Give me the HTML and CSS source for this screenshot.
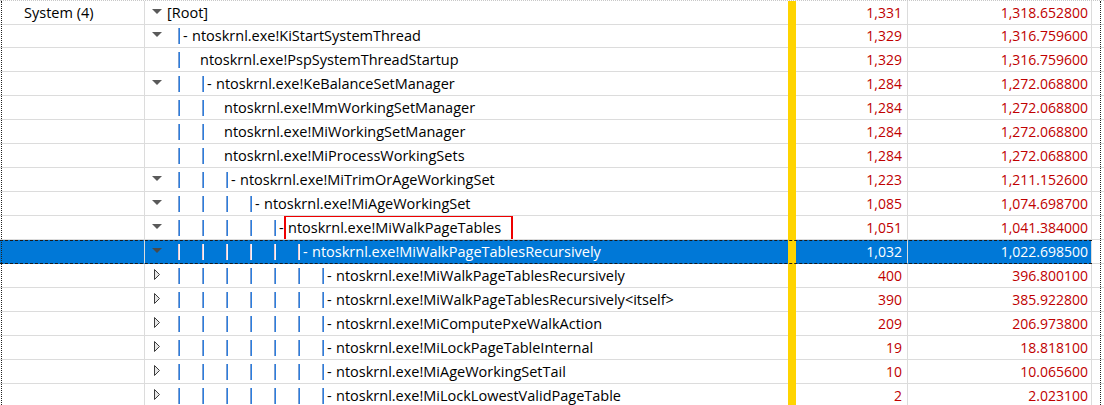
FILE: index.html
```html
<!DOCTYPE html>
<html lang="ko">
<head>
    <meta charset="UTF-8">
    <title>Stacks</title>
    <link rel="stylesheet" href="styles.css">
</head>
<body>

    <div class="grid">

        <div class="row">
            <div class="cell proc">System (4)</div>
            <div class="cell tree">
                <span class="tog"><svg width="10" height="6"><path d="M0 0H10L5 5Z" fill="#5a5a5a"/></svg></span>
                <span class="name">[Root]</span>
            </div>
            <div class="mark"></div>
            <div class="cell num">1,331</div>
            <div class="cell num wt">1,318.652800</div>
            <div class="cell end"></div>
        </div>

        <div class="row">
            <div class="cell proc"></div>
            <div class="cell tree">
                <span class="tog"><svg width="10" height="6"><path d="M0 0H10L5 5Z" fill="#5a5a5a"/></svg></span>
                <span class="lead"></span><span class="g br">-</span>
                <span class="name">ntoskrnl.exe!KiStartSystemThread</span>
            </div>
            <div class="mark"></div>
            <div class="cell num">1,329</div>
            <div class="cell num wt">1,316.759600</div>
            <div class="cell end"></div>
        </div>

        <div class="row">
            <div class="cell proc"></div>
            <div class="cell tree">
                <span class="tog"></span>
                <span class="lead"></span><span class="g lf"></span>
                <span class="name">ntoskrnl.exe!PspSystemThreadStartup</span>
            </div>
            <div class="mark"></div>
            <div class="cell num">1,329</div>
            <div class="cell num wt">1,316.759600</div>
            <div class="cell end"></div>
        </div>

        <div class="row">
            <div class="cell proc"></div>
            <div class="cell tree">
                <span class="tog"><svg width="10" height="6"><path d="M0 0H10L5 5Z" fill="#5a5a5a"/></svg></span>
                <span class="lead"></span><span class="g"></span><span class="g br">-</span>
                <span class="name">ntoskrnl.exe!KeBalanceSetManager</span>
            </div>
            <div class="mark"></div>
            <div class="cell num">1,284</div>
            <div class="cell num wt">1,272.068800</div>
            <div class="cell end"></div>
        </div>

        <div class="row">
            <div class="cell proc"></div>
            <div class="cell tree">
                <span class="tog"></span>
                <span class="lead"></span><span class="g"></span><span class="g lf"></span>
                <span class="name">ntoskrnl.exe!MmWorkingSetManager</span>
            </div>
            <div class="mark"></div>
            <div class="cell num">1,284</div>
            <div class="cell num wt">1,272.068800</div>
            <div class="cell end"></div>
        </div>

        <div class="row">
            <div class="cell proc"></div>
            <div class="cell tree">
                <span class="tog"></span>
                <span class="lead"></span><span class="g"></span><span class="g lf"></span>
                <span class="name">ntoskrnl.exe!MiWorkingSetManager</span>
            </div>
            <div class="mark"></div>
            <div class="cell num">1,284</div>
            <div class="cell num wt">1,272.068800</div>
            <div class="cell end"></div>
        </div>

        <div class="row">
            <div class="cell proc"></div>
            <div class="cell tree">
                <span class="tog"></span>
                <span class="lead"></span><span class="g"></span><span class="g lf"></span>
                <span class="name">ntoskrnl.exe!MiProcessWorkingSets</span>
            </div>
            <div class="mark"></div>
            <div class="cell num">1,284</div>
            <div class="cell num wt">1,272.068800</div>
            <div class="cell end"></div>
        </div>

        <div class="row">
            <div class="cell proc"></div>
            <div class="cell tree">
                <span class="tog"><svg width="10" height="6"><path d="M0 0H10L5 5Z" fill="#5a5a5a"/></svg></span>
                <span class="lead"></span><span class="g"></span><span class="g"></span><span class="g br">-</span>
                <span class="name">ntoskrnl.exe!MiTrimOrAgeWorkingSet</span>
            </div>
            <div class="mark"></div>
            <div class="cell num">1,223</div>
            <div class="cell num wt">1,211.152600</div>
            <div class="cell end"></div>
        </div>

        <div class="row">
            <div class="cell proc"></div>
            <div class="cell tree">
                <span class="tog"><svg width="10" height="6"><path d="M0 0H10L5 5Z" fill="#5a5a5a"/></svg></span>
                <span class="lead"></span><span class="g"></span><span class="g"></span><span class="g"></span><span class="g br">-</span>
                <span class="name">ntoskrnl.exe!MiAgeWorkingSet</span>
            </div>
            <div class="mark"></div>
            <div class="cell num">1,085</div>
            <div class="cell num wt">1,074.698700</div>
            <div class="cell end"></div>
        </div>

        <div class="row">
            <div class="cell proc"></div>
            <div class="cell tree">
                <span class="tog"><svg width="10" height="6"><path d="M0 0H10L5 5Z" fill="#5a5a5a"/></svg></span>
                <span class="lead"></span><span class="g"></span><span class="g"></span><span class="g"></span><span class="g"></span><span class="g br">-</span>
                <span class="name boxed">ntoskrnl.exe!MiWalkPageTables</span>
            </div>
            <div class="mark"></div>
            <div class="cell num">1,051</div>
            <div class="cell num wt">1,041.384000</div>
            <div class="cell end"></div>
        </div>

        <div class="row sel">
            <div class="cell proc"></div>
            <div class="cell tree">
                <span class="tog"><svg width="10" height="6"><path d="M0 0H10L5 5Z" fill="#4a4a4a"/></svg></span>
                <span class="lead"></span><span class="g"></span><span class="g"></span><span class="g"></span><span class="g"></span><span class="g"></span><span class="g br">-</span>
                <span class="name">ntoskrnl.exe!MiWalkPageTablesRecursively</span>
            </div>
            <div class="mark"></div>
            <div class="cell num">1,032</div>
            <div class="cell num wt">1,022.698500</div>
            <div class="cell end"></div>
        </div>

        <div class="row">
            <div class="cell proc"></div>
            <div class="cell tree">
                <span class="tog"><svg width="6" height="11"><path d="M0.5 0.5L5.5 5.5L0.5 10.5Z" fill="#e6e6e6" stroke="#3c3c3c"/></svg></span>
                <span class="lead"></span><span class="g"></span><span class="g"></span><span class="g"></span><span class="g"></span><span class="g"></span><span class="g"></span><span class="g br">-</span>
                <span class="name">ntoskrnl.exe!MiWalkPageTablesRecursively</span>
            </div>
            <div class="mark"></div>
            <div class="cell num">400</div>
            <div class="cell num wt">396.800100</div>
            <div class="cell end"></div>
        </div>

        <div class="row">
            <div class="cell proc"></div>
            <div class="cell tree">
                <span class="tog"><svg width="6" height="11"><path d="M0.5 0.5L5.5 5.5L0.5 10.5Z" fill="#e6e6e6" stroke="#3c3c3c"/></svg></span>
                <span class="lead"></span><span class="g"></span><span class="g"></span><span class="g"></span><span class="g"></span><span class="g"></span><span class="g"></span><span class="g br">-</span>
                <span class="name">ntoskrnl.exe!MiWalkPageTablesRecursively&lt;itself&gt;</span>
            </div>
            <div class="mark"></div>
            <div class="cell num">390</div>
            <div class="cell num wt">385.922800</div>
            <div class="cell end"></div>
        </div>

        <div class="row">
            <div class="cell proc"></div>
            <div class="cell tree">
                <span class="tog"><svg width="6" height="11"><path d="M0.5 0.5L5.5 5.5L0.5 10.5Z" fill="#e6e6e6" stroke="#3c3c3c"/></svg></span>
                <span class="lead"></span><span class="g"></span><span class="g"></span><span class="g"></span><span class="g"></span><span class="g"></span><span class="g"></span><span class="g br">-</span>
                <span class="name">ntoskrnl.exe!MiComputePxeWalkAction</span>
            </div>
            <div class="mark"></div>
            <div class="cell num">209</div>
            <div class="cell num wt">206.973800</div>
            <div class="cell end"></div>
        </div>

        <div class="row">
            <div class="cell proc"></div>
            <div class="cell tree">
                <span class="tog"><svg width="6" height="11"><path d="M0.5 0.5L5.5 5.5L0.5 10.5Z" fill="#e6e6e6" stroke="#3c3c3c"/></svg></span>
                <span class="lead"></span><span class="g"></span><span class="g"></span><span class="g"></span><span class="g"></span><span class="g"></span><span class="g"></span><span class="g br">-</span>
                <span class="name">ntoskrnl.exe!MiLockPageTableInternal</span>
            </div>
            <div class="mark"></div>
            <div class="cell num">19</div>
            <div class="cell num wt">18.818100</div>
            <div class="cell end"></div>
        </div>

        <div class="row">
            <div class="cell proc"></div>
            <div class="cell tree">
                <span class="tog"><svg width="6" height="11"><path d="M0.5 0.5L5.5 5.5L0.5 10.5Z" fill="#e6e6e6" stroke="#3c3c3c"/></svg></span>
                <span class="lead"></span><span class="g"></span><span class="g"></span><span class="g"></span><span class="g"></span><span class="g"></span><span class="g"></span><span class="g br">-</span>
                <span class="name">ntoskrnl.exe!MiAgeWorkingSetTail</span>
            </div>
            <div class="mark"></div>
            <div class="cell num">10</div>
            <div class="cell num wt">10.065600</div>
            <div class="cell end"></div>
        </div>

        <div class="row">
            <div class="cell proc"></div>
            <div class="cell tree">
                <span class="tog"><svg width="6" height="11"><path d="M0.5 0.5L5.5 5.5L0.5 10.5Z" fill="#e6e6e6" stroke="#3c3c3c"/></svg></span>
                <span class="lead"></span><span class="g"></span><span class="g"></span><span class="g"></span><span class="g"></span><span class="g"></span><span class="g"></span><span class="g br">-</span>
                <span class="name">ntoskrnl.exe!MiLockLowestValidPageTable</span>
            </div>
            <div class="mark"></div>
            <div class="cell num">2</div>
            <div class="cell num wt">2.023100</div>
            <div class="cell end"></div>
        </div>

    </div>

</body>
</html>
```

FILE: styles.css
```css
body {
    margin: 0;
    background: #fff;
    font-family: 'Open Sans', 'Noto Sans', sans-serif;
    font-size: 14.5px;
    color: #000;
    overflow: hidden;
}

.grid {
    width: 1104px;
    height: 405px;
    overflow: hidden;
    position: relative;
    border-top: 1px dotted #c8c8c8;
    box-sizing: border-box;
}

/* dotted focus edges left and right */
.grid::before,
.grid::after {
    content: "";
    position: absolute;
    top: 0;
    bottom: 0;
    border-left: 1px dotted #222;
    z-index: 2;
}

.grid::before { left: 1px; }
.grid::after { left: 1100px; }

.row {
    display: grid;
    grid-template-columns: 145px 643px 8px 112px 184px 12px;
    height: 24px;
    position: relative;
}

.row:first-child {
    height: 23px;
}

.cell {
    border-bottom: 1px solid #dcdcdc;
    display: flex;
    align-items: center;
    white-space: nowrap;
    line-height: 23px;
}

.proc {
    border-right: 1px solid #dcdcdc;
    padding-left: 24px;
}

.tree {
    overflow: hidden;
}

.mark {
    background: #ffd400;
}

.num {
    justify-content: flex-end;
    padding-right: 5px;
    color: #c00000;
    font-size: 14px;
    border-right: 1px solid #dcdcdc;
}

.num.wt {
    padding-right: 3px;
}

/* tree pieces */
.tog {
    width: 22px;
    height: 23px;
    flex: none;
    display: flex;
    align-items: center;
    justify-content: center;
    padding-left: 1px;
    padding-bottom: 2px;
    box-sizing: border-box;
}

.lead {
    width: 11px;
    flex: none;
}

.g {
    width: 24px;
    height: 16px;
    flex: none;
    position: relative;
    line-height: 16px;
}

.g::before {
    content: "";
    position: absolute;
    left: 0;
    top: 0;
    width: 2px;
    height: 16px;
    background: linear-gradient(to right, #7f9fd0 0 1px, #2a7ee0 1px 2px);
}

.g.br {
    width: 14px;
    padding-left: 5px;
    box-sizing: border-box;
}

.g.lf {
    width: 22px;
}

.name {
    position: relative;
}

/* red annotation box */
.boxed::after {
    content: "";
    position: absolute;
    left: -4px;
    right: -12px;
    top: -1px;
    bottom: -3px;
    border: 2px solid #ee0000;
}

/* selected row */
.row.sel .cell {
    background: #0078d7;
    color: #fff;
    border-bottom-color: #0078d7;
}

.row.sel .end {
    background: #fff;
    border-bottom-color: #dcdcdc;
}

.row.sel .g::before {
    background: linear-gradient(to right, #eac6cc 0 1px, #f2f5ff 1px 2px);
}

.row.sel::after {
    content: "";
    position: absolute;
    left: 0;
    top: 0;
    width: 1092px;
    height: 22px;
    border-top: 1px dashed #1a1a1a;
    border-bottom: 1px dashed #1a1a1a;
    pointer-events: none;
}
```
